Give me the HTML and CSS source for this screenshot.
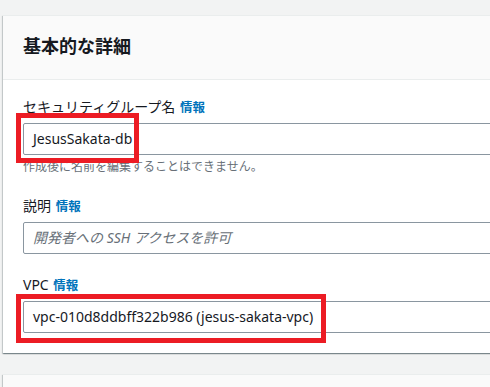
FILE: index.html
```html
<!DOCTYPE html>
<html lang="ja">
<head>
<meta charset="utf-8">
<link rel="stylesheet" href="styles.css">
</head>
<body>
<div class="page">
  <section class="card">
    <header class="card-header"><h2 class="card-title">基本的な詳細</h2></header>
    <div class="card-body">
      <div class="field">
        <div class="label">セキュリティグループ名 <a class="info">情報</a></div>
        <div class="control">
          <div class="input">JesusSakata-db</div>
          <div class="mark mark-name"></div>
        </div>
        <div class="hint">作成後に名前を編集することはできません。</div>
      </div>
      <div class="field">
        <div class="label">説明 <a class="info">情報</a></div>
        <div class="control">
          <div class="input placeholder">開発者への SSH アクセスを許可</div>
        </div>
      </div>
      <div class="field">
        <div class="label">VPC <a class="info">情報</a></div>
        <div class="control">
          <div class="input">vpc-010d8ddbff322b986 (jesus-sakata-vpc)</div>
          <div class="mark mark-vpc"></div>
        </div>
      </div>
    </div>
  </section>
  <section class="card card-next">
    <header class="card-header"></header>
  </section>
</div>
</body>
</html>
```
FILE: styles.css
```css
html, body {
  margin: 0;
  padding: 0;
  background: #f2f3f3;
}
body {
  font-family: "Noto Sans", "Noto Sans CJK JP", sans-serif;
  color: #16191f;
  font-size: 14px;
}
.page {
  box-sizing: border-box;
  width: 490px;
  height: 387px;
  overflow: hidden;
  padding: 15px 0 0 3px;
  display: flex;
  flex-direction: column;
  gap: 21px;
}
.card {
  flex: none;
  width: 540px;
  background: #fff;
  border-top: 1px solid #eaeded;
  box-shadow: 0 1px 1px 0 rgba(0, 28, 36, 0.3), 1px 1px 1px 0 rgba(0, 28, 36, 0.15), -1px 1px 1px 0 rgba(0, 28, 36, 0.15);
}
.card-header {
  background: #fafafa;
  border-bottom: 1px solid #eaeded;
  padding: 19px 20px 22px;
}
.card-title {
  margin: 0;
  font-size: 18px;
  line-height: 22px;
  font-weight: 700;
}
.card-body {
  padding: 16px 20px 20px;
  display: flex;
  flex-direction: column;
  gap: 20px;
}
.field {
  display: flex;
  flex-direction: column;
}
.label {
  font-size: 14px;
  line-height: 22px;
  margin-bottom: 4px;
}
.info {
  color: #0073bb;
  font-weight: 700;
  font-size: 12.5px;
  margin-left: 1px;
}
.control {
  position: relative;
}
.input {
  height: 30px;
  line-height: 30px;
  border: 1px solid #8a96a0;
  border-radius: 2px;
  padding: 0 9px;
  font-size: 14px;
  background: #fff;
}
.placeholder {
  color: #687078;
  font-style: italic;
}
.hint {
  margin-top: 4px;
  font-size: 12px;
  line-height: 16px;
  color: #687078;
}
.mark {
  position: absolute;
  border: 5px solid #ec1c24;
  box-sizing: border-box;
}
.mark-name {
  left: -7px;
  top: -10px;
  width: 123px;
  height: 50px;
}
.mark-vpc {
  left: -7px;
  top: -7px;
  width: 310px;
  height: 49px;
}
.card-next .card-header {
  height: 40px;
  padding: 0;
}
```
